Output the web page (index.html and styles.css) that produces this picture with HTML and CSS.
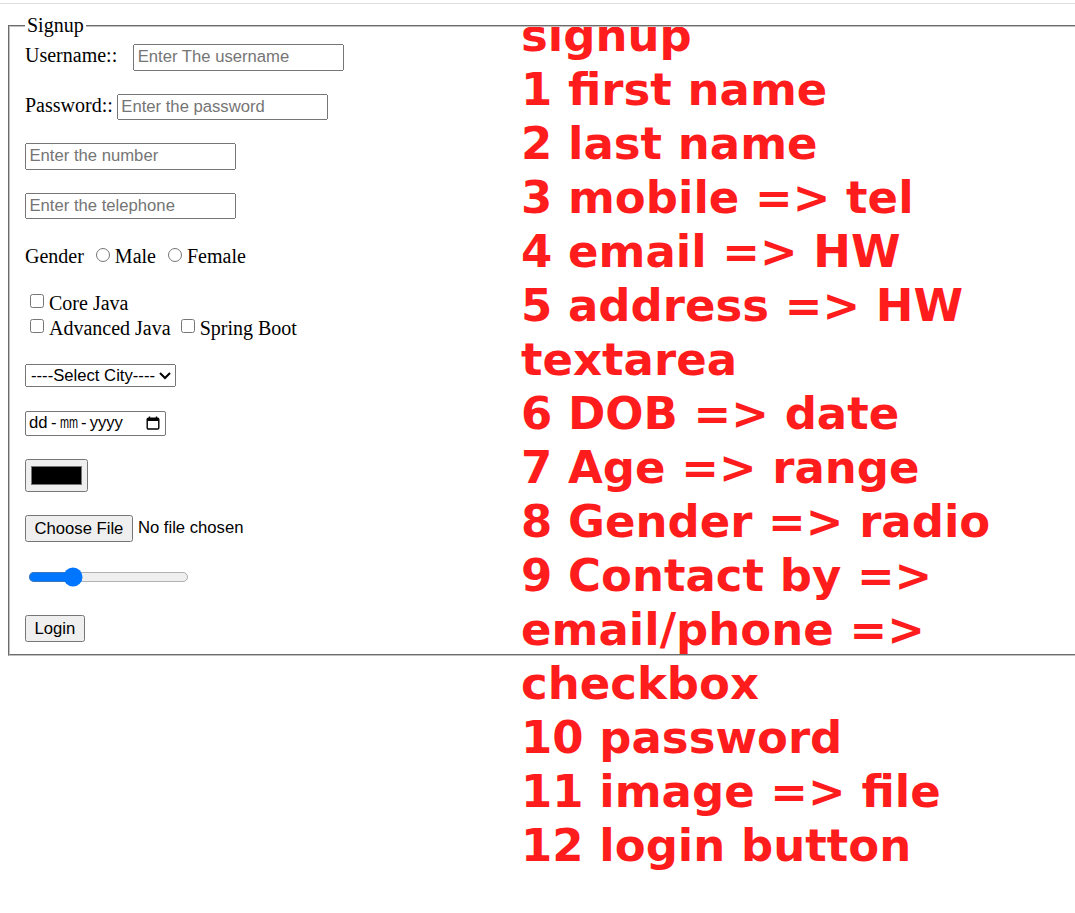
FILE: index.html
```html
<!DOCTYPE html>
<html lang="en">
<head>
<meta charset="utf-8">
<title>Signup</title>
<link rel="stylesheet" href="styles.css">
</head>
<body>
<div class="topline"></div>
<form class="form">
  <fieldset class="signup">
    <legend class="legend">Signup</legend>
    <div class="line gap"><label class="lbl lbl-user">Username::</label><input class="ctl field" type="text" placeholder="Enter The username"></div>
    <div class="line gap"><label class="lbl lbl-pass">Password::</label><input class="ctl field" type="password" placeholder="Enter the password"></div>
    <div class="line gap"><input class="ctl field" type="number" placeholder="Enter the number"></div>
    <div class="line gap"><input class="ctl field" type="tel" placeholder="Enter the telephone"></div>
    <div class="line gap">Gender <input class="radio" type="radio" name="gender">Male <input class="radio" type="radio" name="gender">Female</div>
    <div class="line"><input class="check check-first" type="checkbox">Core Java</div>
    <div class="line gap"><input class="check" type="checkbox">Advanced Java <input class="check" type="checkbox">Spring Boot</div>
    <div class="line gap"><select class="ctl select"><option>----Select City----</option><option>Pune</option><option>Mumbai</option><option>Delhi</option></select></div>
    <div class="line gap"><span class="datebox"><span class="seg">dd</span><span class="sep">-</span><span class="seg seg-mm">mm</span><span class="sep">-</span><span class="seg">yyyy</span><svg class="cal" width="14" height="14" viewBox="0 0 14 14" aria-hidden="true"><path d="M3.5 0.5v2.5M10.5 0.5v2.5" stroke="#000" stroke-width="1.4" fill="none"/><rect x="1.2" y="2.2" width="11.6" height="10.8" rx="1.2" fill="none" stroke="#000" stroke-width="1.4"/><rect x="1.2" y="2.2" width="11.6" height="2.8" fill="#000"/></svg></span></div>
    <div class="line gap"><input class="ctl color" type="color" value="#000000"></div>
    <div class="line gap"><input class="ctl file" type="file"></div>
    <div class="line gap"><input class="ctl range" type="range" value="25"></div>
    <div class="line"><button class="ctl btn" type="button">Login</button></div>
  </fieldset>
</form>
<div class="notes" aria-label="notes">
  <div class="notes-text">
    <p class="note">signup</p>
    <p class="note">1 first name</p>
    <p class="note">2 last name</p>
    <p class="note">3 mobile =&gt; tel</p>
    <p class="note">4 email =&gt; HW</p>
    <p class="note">5 address =&gt; HW</p>
    <p class="note">textarea</p>
    <p class="note">6 DOB =&gt; date</p>
    <p class="note">7 Age =&gt; range</p>
    <p class="note">8 Gender =&gt; radio</p>
    <p class="note">9 Contact by =&gt;</p>
    <p class="note">email/phone =&gt;</p>
    <p class="note">checkbox</p>
    <p class="note">10 password</p>
    <p class="note">11 image =&gt; file</p>
    <p class="note">12 login button</p>
  </div>
</div>
</body>
</html>
```

FILE: styles.css
```css
html {
  overflow: hidden;
  background: #fff;
}

body {
  margin: 0;
  min-height: 913px;
  position: relative;
  font-family: "Liberation Serif", "Times New Roman", serif;
  font-size: 20px;
  color: #000;
}

.topline {
  height: 3px;
  border-bottom: 1px solid #dedede;
}

.form {
  margin: 10px 0 0 8px;
  width: 1200px;
}

.signup {
  margin: 0;
  min-width: 0;
  border: 2px groove #c0c0c0;
  padding: 7px 15px 12.5px;
}

.legend {
  padding: 0 2px;
}

.gap {
  margin-bottom: 23px;
}

.lbl-user {
  margin-right: 16px;
}

.lbl-pass {
  margin-right: 4px;
}

.ctl {
  zoom: 1.25;
  font-family: "Liberation Sans", Arial, sans-serif;
  font-size: 13.333px;
}

.field {
  box-sizing: border-box;
  width: 169px;
}

.radio {
  width: 14px;
  height: 14px;
  margin: 6px 5px 0 7px;
  vertical-align: 1px;
}

.check {
  width: 14px;
  height: 14px;
  margin: 4px 5px 0 5px;
  vertical-align: 2px;
}

.check-first {
  margin-top: 3px;
}

.datebox {
  display: inline-flex;
  align-items: center;
  box-sizing: border-box;
  width: 141px;
  height: 25px;
  padding: 0 0 0 3px;
  border: 1px solid #767676;
  border-radius: 2px;
  font-family: "Liberation Sans", Arial, sans-serif;
  font-size: 16.667px;
  color: #000;
}

.sep {
  padding: 0 3px 0 3.5px;
}

.seg-mm {
  display: inline-block;
  width: 18px;
  transform: scaleX(0.65);
  transform-origin: left center;
}

.cal {
  margin-left: auto;
  margin-right: 5px;
}

.notes {
  position: absolute;
  left: 521px;
  top: 27px;
  width: 554px;
  height: 886px;
  overflow: hidden;
  z-index: -1;
}

.notes-text {
  margin-top: -17.6px;
  font-family: "DejaVu Sans", Verdana, sans-serif;
  font-weight: bold;
  font-size: 45px;
  line-height: 54px;
  color: #ff1c1c;
}

.note {
  margin: 0;
  white-space: nowrap;
}
```
